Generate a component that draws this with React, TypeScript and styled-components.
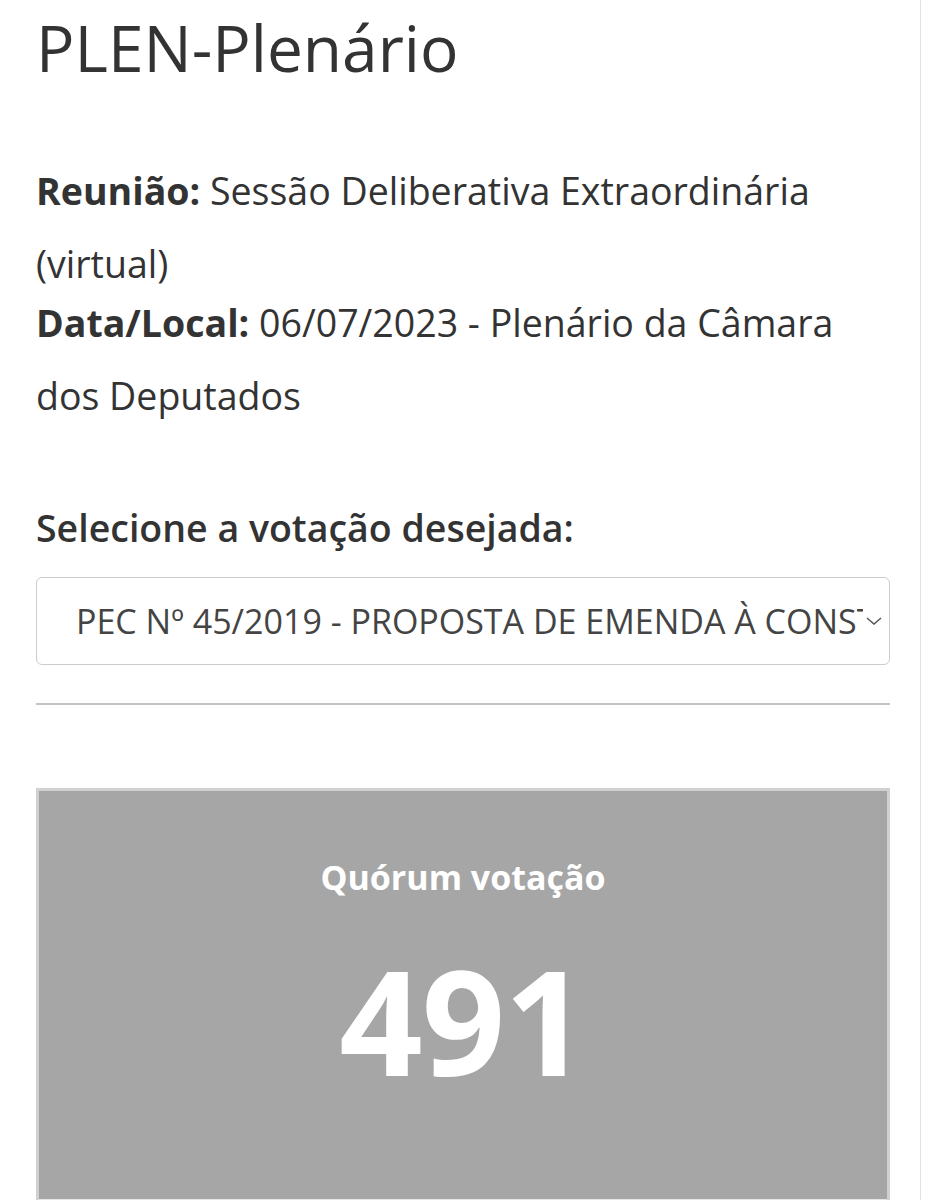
import React from 'react';
import styled, { createGlobalStyle } from 'styled-components';

const GlobalStyle = createGlobalStyle`
  body {
    margin: 0;
    background: #fff;
    font-family: "Open Sans", "Noto Sans", sans-serif;
    color: #333;
  }
`;

const Page = styled.div`
  width: 921px;
  min-height: 1200px;
  box-sizing: border-box;
  padding: 11px 30px 0 36px;
  border-right: 1px solid #e2e2e2;
`;

const Title = styled.h1`
  margin: 0;
  font-size: 64px;
  line-height: 74px;
  font-weight: 400;
  color: #333;
`;

const Info = styled.div`
  margin-top: 69px;
`;

const InfoLine = styled.p<{ $first?: boolean }>`
  margin: ${(p) => (p.$first ? '0' : '-14px 0 0')};
  font-size: 37.5px;
  line-height: 73px;
  color: #333;

  b {
    font-weight: 700;
  }
`;

const SelectLabel = styled.label`
  display: block;
  margin-top: 70px;
  font-size: 37.5px;
  line-height: 52px;
  font-weight: 600;
  color: #333;
`;

const SelectBox = styled.div`
  margin-top: 23px;
  height: 88px;
  box-sizing: border-box;
  border: 1.5px solid #ccc;
  border-radius: 6px;
  display: flex;
  align-items: center;
  padding: 0 6px 0 39px;
  overflow: hidden;
`;

const SelectText = styled.span`
  flex: 1;
  white-space: nowrap;
  overflow: hidden;
  font-size: 34px;
  color: #444;
`;

const Chevron = styled.svg`
  width: 18px;
  height: 12px;
  flex: none;
  margin-left: 2px;
`;

const Divider = styled.hr`
  margin: 38px 0 0;
  border: none;
  border-top: 2px solid #c4c4c4;
`;

const QuorumCard = styled.section`
  margin-top: 83px;
  border: 3px solid #d0d0d0;
  border-bottom: none;
  background: #a6a6a6;
  display: flex;
  flex-direction: column;
  align-items: center;
`;

const QuorumLabel = styled.h2`
  margin: 64px 0 0;
  font-size: 34px;
  line-height: 44px;
  font-weight: 700;
  color: #fff;
`;

const QuorumValue = styled.div`
  margin-top: 46px;
  font-size: 146px;
  line-height: 150px;
  font-weight: 700;
  color: #fff;
  letter-spacing: -1px;
`;

const QuorumFooter = styled.div`
  align-self: stretch;
  margin-top: 104px;
  height: 20px;
  background: #e6e6e6;
`;

export default function App() {
  return (
    <>
      <GlobalStyle />
      <Page>
        <Title>PLEN-Plenário</Title>
        <Info>
          <InfoLine $first>
            <b>Reunião:</b> Sessão Deliberativa Extraordinária (virtual)
          </InfoLine>
          <InfoLine>
            <b>Data/Local:</b> 06/07/2023 - Plenário da Câmara dos Deputados
          </InfoLine>
        </Info>
        <SelectLabel>Selecione a votação desejada:</SelectLabel>
        <SelectBox>
          <SelectText>PEC Nº 45/2019 - PROPOSTA DE EMENDA À CONSTITUIÇÃO</SelectText>
          <Chevron viewBox="0 0 18 12">
            <path d="M2 3l7 6 7-6" fill="none" stroke="#555" strokeWidth="1.5" />
          </Chevron>
        </SelectBox>
        <Divider />
        <QuorumCard>
          <QuorumLabel>Quórum votação</QuorumLabel>
          <QuorumValue>491</QuorumValue>
          <QuorumFooter />
        </QuorumCard>
      </Page>
    </>
  );
}
